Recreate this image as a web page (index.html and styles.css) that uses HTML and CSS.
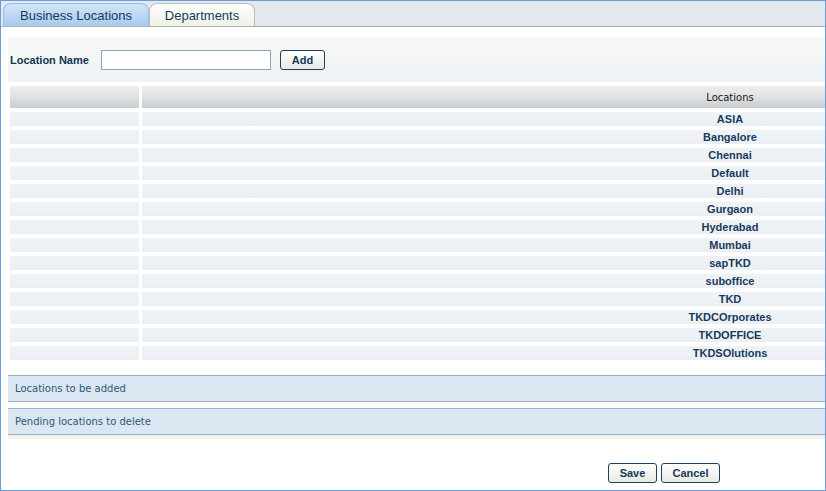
FILE: index.html
```html
<!DOCTYPE html>
<html>
<head>
<meta charset="utf-8">
<link rel="stylesheet" href="styles.css">
</head>
<body>
<div class="frame">
  <div class="tabs">
    <div class="tab tab-blue">Business Locations</div>
    <div class="tab tab-white">Departments</div>
  </div>
  <div class="content">
    <div class="form-panel">
      <label class="label">Location Name</label>
      <input class="text-input" type="text">
      <button class="btn btn-add">Add</button>
    </div>
    <div class="grid">
      <div class="hcell"></div>
      <div class="hcell hcell-main">Locations</div>
      <div class="cell"></div><div class="cell cell-main">ASIA</div>
      <div class="cell"></div><div class="cell cell-main">Bangalore</div>
      <div class="cell"></div><div class="cell cell-main">Chennai</div>
      <div class="cell"></div><div class="cell cell-main">Default</div>
      <div class="cell"></div><div class="cell cell-main">Delhi</div>
      <div class="cell"></div><div class="cell cell-main">Gurgaon</div>
      <div class="cell"></div><div class="cell cell-main">Hyderabad</div>
      <div class="cell"></div><div class="cell cell-main">Mumbai</div>
      <div class="cell"></div><div class="cell cell-main">sapTKD</div>
      <div class="cell"></div><div class="cell cell-main">suboffice</div>
      <div class="cell"></div><div class="cell cell-main">TKD</div>
      <div class="cell"></div><div class="cell cell-main">TKDCOrporates</div>
      <div class="cell"></div><div class="cell cell-main">TKDOFFICE</div>
      <div class="cell"></div><div class="cell cell-main">TKDSOlutions</div>
    </div>
    <div class="panel panel-first">Locations to be added</div>
    <div class="panel panel-second">Pending locations to delete</div>
    <div class="cream"></div>
    <div class="actions">
      <button class="btn btn-save">Save</button>
      <button class="btn btn-cancel">Cancel</button>
    </div>
  </div>
</div>
</body>
</html>
```
FILE: styles.css
```css
html, body {
  margin: 0;
  padding: 0;
  background: #ffffff;
}
.frame {
  width: 826px;
  height: 491px;
  box-sizing: border-box;
  border: 1px solid #6b9bd9;
  background: #ffffff;
  font-family: "Liberation Sans", Arial, sans-serif;
  overflow: hidden;
}
.tabs {
  height: 25px;
  background: #e3e8ec;
  border-bottom: 1px solid #aab5ab;
  display: flex;
  align-items: flex-end;
  padding-left: 2px;
}
.tab {
  height: 23px;
  box-sizing: border-box;
  border-radius: 8px 8px 0 0;
  font-size: 13px;
  color: #123b5a;
  display: flex;
  align-items: center;
  justify-content: center;
}
.tab-blue {
  width: 146px;
  background: linear-gradient(#d3e5f7, #a9c9ee);
  border: 1px solid #9dbde6;
  border-bottom: none;
}
.tab-white {
  width: 106px;
  background: linear-gradient(#ffffff, #f0f1e6);
  border: 1px solid #b7bec6;
  border-bottom: none;
}
.content {
  padding: 10px 0 0 7px;
}
.form-panel {
  height: 45px;
  background: linear-gradient(#f5f7f7 0, #f5f7f7 26px, #f0f3f5 26px, #f0f3f5 100%);
  display: flex;
  align-items: center;
  padding-left: 2px;
  padding-top: 1px;
  box-sizing: border-box;
}
.label {
  font-weight: bold;
  font-size: 11px;
  color: #0f3552;
  width: 91px;
}
.text-input {
  width: 170px;
  height: 20px;
  box-sizing: border-box;
  border: 1px solid #8aa2bb;
  background: #fff;
  margin: 0;
  padding: 0;
}
.btn {
  height: 20px;
  box-sizing: border-box;
  border: 1px solid #1f3f5e;
  border-radius: 3px;
  background: linear-gradient(#ffffff, #e9e9e2);
  font-family: "Liberation Sans", Arial, sans-serif;
  font-weight: bold;
  font-size: 11px;
  color: #16385a;
  padding: 0;
  margin: 0;
}
.btn-add {
  width: 45px;
  margin-left: 9px;
  margin-top: -1px;
}
.grid {
  display: grid;
  grid-template-columns: 129px 683px;
  column-gap: 3px;
  row-gap: 4px;
  grid-auto-rows: 14px;
  grid-template-rows: 23px;
  margin: 3px 0 0 2px;
}
.hcell {
  background: linear-gradient(#eceeef, #dfe2e4 50%, #c9cdd0);
  border-top: 1px solid #ffffff;
  box-sizing: border-box;
}
.hcell-main {
  font-family: "DejaVu Sans", sans-serif;
  font-size: 10px;
  color: #1a1a1a;
  display: flex;
  align-items: center;
  justify-content: center;
  padding-left: 493px;
}
.cell {
  background: linear-gradient(#f0f3f6, #ebeff3);
}
.cell-main {
  font-weight: bold;
  font-size: 11px;
  color: #173b5c;
  display: flex;
  align-items: center;
  justify-content: center;
  padding-left: 493px;
}
.panel {
  height: 27px;
  box-sizing: border-box;
  background: #dbe6f3;
  border-top: 1px solid #9ab0c9;
  border-bottom: 1px solid #9ab0c9;
  font-family: "DejaVu Sans", sans-serif;
  font-size: 10px;
  color: #2d5a72;
  display: flex;
  align-items: center;
  padding-left: 7px;
}
.panel-first {
  margin-top: 15px;
}
.panel-second {
  margin-top: 6px;
}
.cream {
  height: 4px;
  background: #f3f4ec;
}
.actions {
  display: flex;
  gap: 4px;
  margin-top: 24px;
  padding-left: 600px;
}
.btn-save {
  width: 49px;
}
.btn-cancel {
  width: 59px;
}
```
